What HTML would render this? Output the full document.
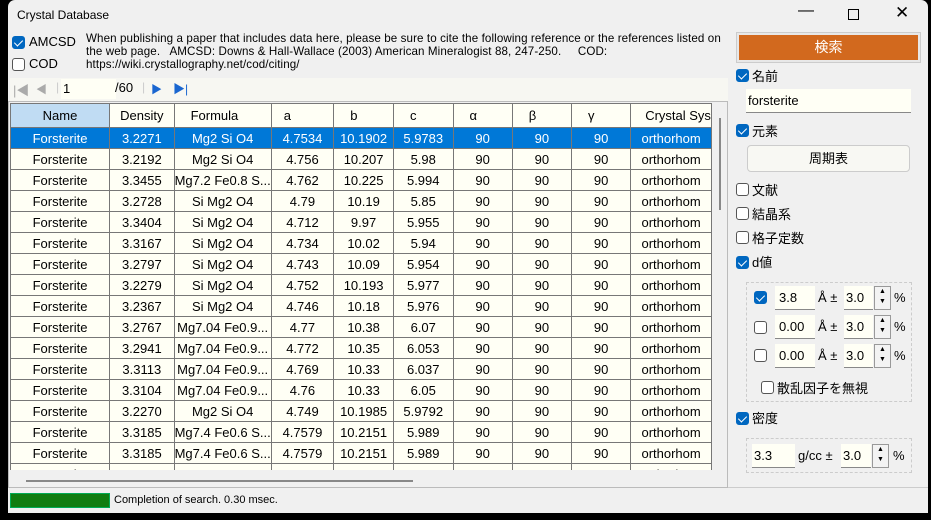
<!DOCTYPE html>
<html><head><meta charset="utf-8"><style>
*{box-sizing:border-box;margin:0;padding:0}
body{width:931px;height:520px;background:#000;position:relative;overflow:hidden;font-family:"Liberation Sans","Noto Sans CJK JP",sans-serif;font-size:12px;color:#000}
.win{position:absolute;left:8px;top:0;width:920px;height:513px;background:#f0f0f0;border-radius:7px 7px 0 0;overflow:hidden}
.a{position:absolute}
.cb{position:absolute;width:13px;height:13px;border:1px solid #555;border-radius:3px;background:#fff}
.cb.on{background:#0067c0;border-color:#0067c0}
.cb.on:after{content:"";position:absolute;left:3px;top:1px;width:4px;height:7px;border:solid #fff;border-width:0 1.5px 1.5px 0;transform:rotate(45deg)}
.lbl{position:absolute;font-size:13px}
table{border-collapse:collapse;table-layout:fixed;position:absolute;left:2px;top:103px}
td{height:21px;border:1px solid #777;border-top:none;text-align:center;font-size:13px;white-space:nowrap;overflow:hidden;background:#fffff5;padding:0}
tr.h td{height:24px;background:#fffff5;border-top:1px solid #777}
tr.s td{background:#0078d7;color:#fff}
.inp{position:absolute;background:#fffff5;border-bottom:1px solid #888;font-size:13px;padding-left:4px}
.spin{position:absolute;width:17px;height:24px;border:1px solid #999;background:#f3f3f3;font-size:7px;line-height:10px;text-align:center}
.grp{position:absolute;border:1px dashed #ccc}
</style></head><body>
<div class="win">
<div class="a" style="left:9px;top:8px;font-size:12px">Crystal Database</div>
<div class="a" style="left:790px;top:2px;font-size:16px">&#8212;</div>
<div class="a" style="left:840px;top:9px;width:11px;height:11px;border:1.3px solid #000"></div>
<div class="a" style="left:887px;top:3px;font-size:17px">&#10005;</div>

<div class="cb on" style="left:4px;top:36px"></div><div class="lbl" style="left:21px;top:34px">AMCSD</div>
<div class="cb" style="left:4px;top:58px"></div><div class="lbl" style="left:21px;top:56px">COD</div>
<div class="a" style="left:78px;top:32px;width:645px;font-size:11.6px;line-height:13px;letter-spacing:0.1px">When publishing a paper that includes data here, please be sure to cite the following reference or the references listed on the web page.&nbsp;&nbsp; AMCSD: Downs &amp; Hall-Wallace (2003) American Mineralogist 88, 247-250.&nbsp;&nbsp;&nbsp;&nbsp; COD: https://wiki.crystallography.net/cod/citing/</div>

<div class="a" style="left:2px;top:78px;width:718px;height:23px;background:#f7f7f2"></div>
<div class="a" style="left:5px;top:80px;color:#aaa;font-size:13px">|&#9664;</div>
<div class="a" style="left:28px;top:81px;color:#aaa;font-size:11px">&#9664;</div>
<div class="a" style="left:48px;top:80px;color:#ccc">|</div>
<div class="a" style="left:53px;top:79px;width:55px;height:20px;background:#fffff5;font-size:13px;padding:2px 2px">1</div>
<div class="a" style="left:107px;top:80px;font-size:13px">/60</div>
<div class="a" style="left:134px;top:80px;color:#ccc">|</div>
<div class="a" style="left:143px;top:81px;color:#1a66d0;font-size:11px">&#9654;</div>
<div class="a" style="left:165px;top:80px;color:#1a66d0;font-size:12px">&#9654;|</div>

<div class="a" style="left:0;top:101px;width:720px;height:387px;border:1px solid #bbb;background:#f0f0f0"></div>
<div class="a" style="left:2px;top:103px;width:702px;height:367px;overflow:hidden">
<table style="left:0;top:0">
<colgroup><col width="100"><col width="65"><col width="97"><col width="63"><col width="60"><col width="60"><col width="60"><col width="60"><col width="60"><col width="80"></colgroup>
<tr class="h"><td style="background:#c0dcf3">Name</td><td>Density</td><td style="text-align:left;padding-left:16px">Formula</td><td style="text-align:left;padding-left:12px">a</td><td style="text-align:left;padding-left:16px">b</td><td style="text-align:left;padding-left:16px">c</td><td style="text-align:left;padding-left:16px">α</td><td style="text-align:left;padding-left:16px">β</td><td style="text-align:left;padding-left:16px">γ</td><td style="text-align:left;padding-left:14px">Crystal Sys</td></tr>
<tr class="s"><td>Forsterite</td><td>3.2271</td><td>Mg2 Si O4</td><td>4.7534</td><td>10.1902</td><td>5.9783</td><td>90</td><td>90</td><td>90</td><td>orthorhom</td></tr>
<tr><td>Forsterite</td><td>3.2192</td><td>Mg2 Si O4</td><td>4.756</td><td>10.207</td><td>5.98</td><td>90</td><td>90</td><td>90</td><td>orthorhom</td></tr>
<tr><td>Forsterite</td><td>3.3455</td><td>Mg7.2 Fe0.8 S...</td><td>4.762</td><td>10.225</td><td>5.994</td><td>90</td><td>90</td><td>90</td><td>orthorhom</td></tr>
<tr><td>Forsterite</td><td>3.2728</td><td>Si Mg2 O4</td><td>4.79</td><td>10.19</td><td>5.85</td><td>90</td><td>90</td><td>90</td><td>orthorhom</td></tr>
<tr><td>Forsterite</td><td>3.3404</td><td>Si Mg2 O4</td><td>4.712</td><td>9.97</td><td>5.955</td><td>90</td><td>90</td><td>90</td><td>orthorhom</td></tr>
<tr><td>Forsterite</td><td>3.3167</td><td>Si Mg2 O4</td><td>4.734</td><td>10.02</td><td>5.94</td><td>90</td><td>90</td><td>90</td><td>orthorhom</td></tr>
<tr><td>Forsterite</td><td>3.2797</td><td>Si Mg2 O4</td><td>4.743</td><td>10.09</td><td>5.954</td><td>90</td><td>90</td><td>90</td><td>orthorhom</td></tr>
<tr><td>Forsterite</td><td>3.2279</td><td>Si Mg2 O4</td><td>4.752</td><td>10.193</td><td>5.977</td><td>90</td><td>90</td><td>90</td><td>orthorhom</td></tr>
<tr><td>Forsterite</td><td>3.2367</td><td>Si Mg2 O4</td><td>4.746</td><td>10.18</td><td>5.976</td><td>90</td><td>90</td><td>90</td><td>orthorhom</td></tr>
<tr><td>Forsterite</td><td>3.2767</td><td>Mg7.04 Fe0.9...</td><td>4.77</td><td>10.38</td><td>6.07</td><td>90</td><td>90</td><td>90</td><td>orthorhom</td></tr>
<tr><td>Forsterite</td><td>3.2941</td><td>Mg7.04 Fe0.9...</td><td>4.772</td><td>10.35</td><td>6.053</td><td>90</td><td>90</td><td>90</td><td>orthorhom</td></tr>
<tr><td>Forsterite</td><td>3.3113</td><td>Mg7.04 Fe0.9...</td><td>4.769</td><td>10.33</td><td>6.037</td><td>90</td><td>90</td><td>90</td><td>orthorhom</td></tr>
<tr><td>Forsterite</td><td>3.3104</td><td>Mg7.04 Fe0.9...</td><td>4.76</td><td>10.33</td><td>6.05</td><td>90</td><td>90</td><td>90</td><td>orthorhom</td></tr>
<tr><td>Forsterite</td><td>3.2270</td><td>Mg2 Si O4</td><td>4.749</td><td>10.1985</td><td>5.9792</td><td>90</td><td>90</td><td>90</td><td>orthorhom</td></tr>
<tr><td>Forsterite</td><td>3.3185</td><td>Mg7.4 Fe0.6 S...</td><td>4.7579</td><td>10.2151</td><td>5.989</td><td>90</td><td>90</td><td>90</td><td>orthorhom</td></tr>
<tr><td>Forsterite</td><td>3.3185</td><td>Mg7.4 Fe0.6 S...</td><td>4.7579</td><td>10.2151</td><td>5.989</td><td>90</td><td>90</td><td>90</td><td>orthorhom</td></tr>
<tr><td>Forsterite</td><td>3.3185</td><td>Mg7.4 Fe0.6 S...</td><td>4.7579</td><td>10.2151</td><td>5.989</td><td>90</td><td>90</td><td>90</td><td>orthorhom</td></tr>
</table></div>
<div class="a" style="left:711px;top:118px;width:2px;height:92px;background:#888"></div>
<div class="a" style="left:18px;top:480px;width:387px;height:2px;background:#888"></div>

<div class="a" style="left:2px;top:493px;width:100px;height:15px;background:#107c10;border:1px solid #0a5"></div>
<div class="a" style="left:106px;top:494px;font-size:11px">Completion of search. 0.30 msec.</div>

<div class="a" style="left:720px;top:101px;width:200px;height:387px;border-bottom:1px solid #ccc"></div>
<div class="a" style="left:729px;top:33px;width:183px;height:29px;background:#d2691e;border:2px solid #e8e8e8;outline:1px solid #ccc;color:#fff;font-size:14px;text-align:center;line-height:25px">検索</div>
<div class="cb on" style="left:728px;top:69px"></div><div class="lbl" style="left:744px;top:66px">名前</div>
<div class="inp" style="left:738px;top:89px;width:165px;height:24px;line-height:23px;padding-left:2px">forsterite</div>
<div class="cb on" style="left:728px;top:124px"></div><div class="lbl" style="left:744px;top:121px">元素</div>
<div class="a" style="left:739px;top:145px;width:163px;height:27px;border:1px solid #ccc;border-radius:4px;background:#f8f8f3;text-align:center;line-height:25px;font-size:13px">周期表</div>
<div class="cb" style="left:728px;top:183px"></div><div class="lbl" style="left:744px;top:180px">文献</div>
<div class="cb" style="left:728px;top:207px"></div><div class="lbl" style="left:744px;top:204px">結晶系</div>
<div class="cb" style="left:728px;top:231px"></div><div class="lbl" style="left:744px;top:228px">格子定数</div>
<div class="cb on" style="left:728px;top:256px"></div><div class="lbl" style="left:744px;top:252px">d値</div>

<div class="grp" style="left:738px;top:282px;width:166px;height:120px"></div>
<div class="cb on" style="left:746px;top:291px"></div>
<div class="inp" style="left:767px;top:286px;width:40px;height:24px;line-height:23px">3.8</div>
<div class="lbl" style="left:810px;top:290px">Å ±</div>
<div class="inp" style="left:836px;top:286px;width:29px;height:24px;line-height:23px;padding-left:2px">3.0</div>
<div class="spin" style="left:866px;top:286px">▲<br>▼</div><div class="lbl" style="left:886px;top:290px">%</div>
<div class="cb" style="left:746px;top:321px"></div>
<div class="inp" style="left:767px;top:315px;width:40px;height:24px;line-height:23px">0.00</div>
<div class="lbl" style="left:810px;top:319px">Å ±</div>
<div class="inp" style="left:836px;top:315px;width:29px;height:24px;line-height:23px;padding-left:2px">3.0</div>
<div class="spin" style="left:866px;top:315px">▲<br>▼</div><div class="lbl" style="left:886px;top:319px">%</div>
<div class="cb" style="left:746px;top:349px"></div>
<div class="inp" style="left:767px;top:344px;width:40px;height:24px;line-height:23px">0.00</div>
<div class="lbl" style="left:810px;top:348px">Å ±</div>
<div class="inp" style="left:836px;top:344px;width:29px;height:24px;line-height:23px;padding-left:2px">3.0</div>
<div class="spin" style="left:866px;top:344px">▲<br>▼</div><div class="lbl" style="left:886px;top:348px">%</div>
<div class="cb" style="left:753px;top:381px"></div><div class="lbl" style="left:769px;top:378px">散乱因子を無視</div>

<div class="cb on" style="left:728px;top:412px"></div><div class="lbl" style="left:744px;top:408px">密度</div>
<div class="grp" style="left:738px;top:438px;width:166px;height:35px"></div>
<div class="inp" style="left:744px;top:444px;width:43px;height:24px;line-height:23px;padding-left:2px">3.3</div>
<div class="lbl" style="left:790px;top:448px">g/cc ±</div>
<div class="inp" style="left:833px;top:444px;width:30px;height:24px;line-height:23px;padding-left:2px">3.0</div>
<div class="spin" style="left:864px;top:444px">▲<br>▼</div><div class="lbl" style="left:885px;top:448px">%</div>
</div>
</body></html>
